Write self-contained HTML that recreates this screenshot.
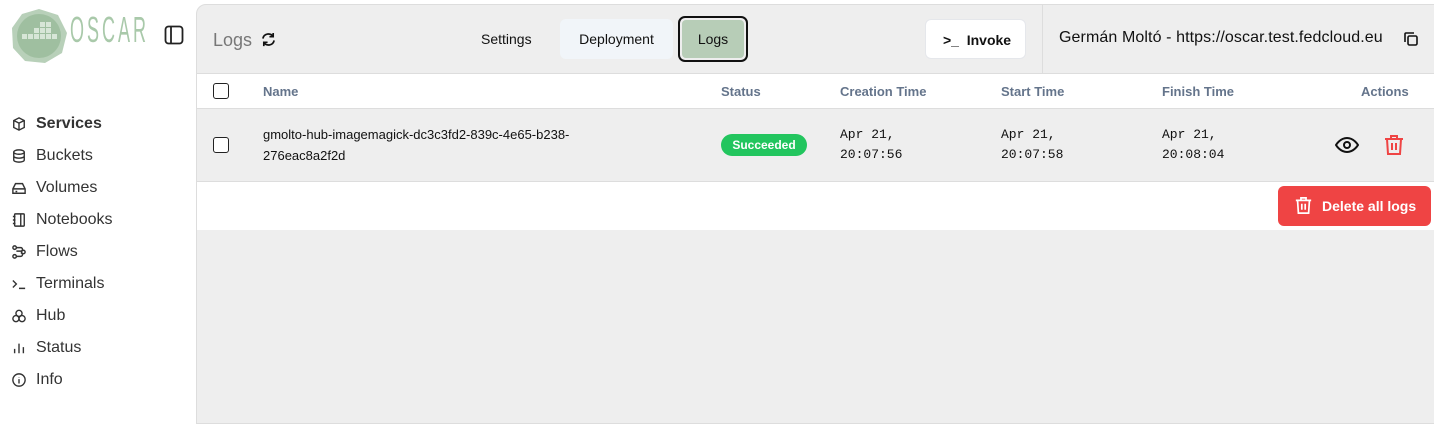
<!DOCTYPE html>
<html><head><meta charset="utf-8"><style>
*{box-sizing:border-box;margin:0;padding:0}
body{width:1434px;height:422px;overflow:hidden;background:#fff;font-family:"Liberation Sans",sans-serif;position:relative;color:#111}
.abs{position:absolute}
.side a{position:absolute;left:12px;display:flex;align-items:center;font-size:16px;color:#333}
.side a svg{width:14px;height:14px;margin-right:10px;stroke:#333;fill:none;stroke-width:1.6}
.main{position:absolute;left:196px;top:4px;width:1240px;height:420px;background:#eeeeee;border:1px solid #ddd;border-top-left-radius:10px}
.th{font-size:13px;color:#64748b;font-weight:bold;position:absolute;top:80px}
.mono{font-family:"Liberation Mono",monospace;font-size:13px;line-height:20px;position:absolute;top:125px;color:#111}
.cb{position:absolute;left:213px;width:16px;height:16px;border:1.5px solid #222;border-radius:3px;background:#fff}
</style></head><body>
<svg class="abs" style="left:10px;top:8px" width="58" height="56" viewBox="0 0 58 56">
<polygon points="29,1 48,7 57,25 52,45 35,55 15,53 3,40 2,20 12,6" fill="#b8d0b9"/>
<circle cx="29" cy="28" r="22" fill="#9fbfa0"/>
<g fill="#d7e6d7"><rect x="30" y="14" width="5" height="5"/><rect x="36" y="14" width="5" height="5"/><rect x="24" y="20" width="5" height="5"/><rect x="30" y="20" width="5" height="5"/><rect x="36" y="20" width="5" height="5"/><rect x="12" y="26" width="5" height="5"/><rect x="18" y="26" width="5" height="5"/><rect x="24" y="26" width="5" height="5"/><rect x="30" y="26" width="5" height="5"/><rect x="36" y="26" width="5" height="5"/><rect x="42" y="26" width="5" height="5"/></g>
</svg>
<div class="abs" style="left:70px;top:9px;font-size:36px;color:#a9c9aa;letter-spacing:6px;transform:scaleX(0.5);transform-origin:left top;white-space:nowrap">OSCAR</div>
<svg class="abs" style="left:164px;top:25px" width="20" height="20" viewBox="0 0 20 20" fill="none" stroke="#222" stroke-width="1.8"><rect x="1.5" y="1.5" width="17" height="17" rx="3"/><line x1="7" y1="2" x2="7" y2="18"/></svg>
<div class="side">
<a style="top:115px;font-weight:bold"><svg viewBox="0 0 16 16"><path d="M8 1l6 3v8l-6 3-6-3V4z M2 4l6 3 6-3 M8 7v8"/></svg>Services</a>
<a style="top:147px"><svg viewBox="0 0 16 16"><ellipse cx="8" cy="3.5" rx="6" ry="2.5"/><path d="M2 3.5v9c0 1.4 2.7 2.5 6 2.5s6-1.1 6-2.5v-9M2 8c0 1.4 2.7 2.5 6 2.5s6-1.1 6-2.5"/></svg>Buckets</a>
<a style="top:179px"><svg viewBox="0 0 16 16"><path d="M1 9l3-6h8l3 6v5H1z M1 9h14 M4 12h2"/></svg>Volumes</a>
<a style="top:211px"><svg viewBox="0 0 16 16"><rect x="3" y="1" width="11" height="14" rx="1"/><path d="M10 1v14 M1 4h3M1 8h3M1 12h3"/></svg>Notebooks</a>
<a style="top:243px"><svg viewBox="0 0 16 16"><circle cx="3" cy="3" r="2"/><circle cx="13" cy="8" r="2"/><circle cx="3" cy="13" r="2"/><path d="M5 3h5a2 2 0 010 4H5M5 13h5a2 2 0 000-4"/></svg>Flows</a>
<a style="top:275px"><svg viewBox="0 0 16 16"><path d="M1 4l4 4-4 4M8 13h7"/></svg>Terminals</a>
<a style="top:307px"><svg viewBox="0 0 16 16"><circle cx="8" cy="5" r="3.5"/><circle cx="4.5" cy="11" r="3.5"/><circle cx="11.5" cy="11" r="3.5"/></svg>Hub</a>
<a style="top:339px"><svg viewBox="0 0 16 16"><path d="M3 14V9M8 14V3M13 14V7"/></svg>Status</a>
<a style="top:371px"><svg viewBox="0 0 16 16"><circle cx="8" cy="8" r="7"/><path d="M8 7v5M8 4.5v.5"/></svg>Info</a>
</div>
<div class="main"></div>
<div class="abs" style="left:213px;top:30px;font-size:18px;color:#777">Logs</div>
<svg class="abs" style="left:261px;top:32px" width="15" height="15" viewBox="0 0 16 16" fill="none" stroke="#111" stroke-width="1.8"><path d="M2 7a6 6 0 0111-2M14 9a6 6 0 01-11 2M13 1v4h-4M3 15v-4h4"/></svg>
<div class="abs" style="left:481px;top:31px;font-size:14px">Settings</div>
<div class="abs" style="left:560px;top:19px;width:113px;height:40px;background:#f1f5f9;border-radius:6px;font-size:14px;text-align:center;line-height:40px">Deployment</div>
<div class="abs" style="left:678px;top:16px;width:70px;height:46px;border:2px solid #111;border-radius:7px;padding:2px"><div style="background:#b7cdb7;border-radius:4px;height:100%;font-size:14px;text-align:center;line-height:38px">Logs</div></div>
<div class="abs" style="left:925px;top:19px;width:101px;height:40px;background:#fff;border:1px solid #e5e7eb;border-radius:6px;font-size:14px;font-weight:bold;line-height:40px;padding-left:17px">&gt;_ &nbsp;Invoke</div>
<div class="abs" style="left:1042px;top:5px;width:1px;height:68px;background:#ddd"></div>
<div class="abs" style="left:1059px;top:29px;font-size:16px;letter-spacing:0.1px">Germán Moltó - https://oscar.test.fedcloud.eu</div>
<svg class="abs" style="left:1403px;top:31px" width="16" height="16" viewBox="0 0 16 16" fill="none" stroke="#111" stroke-width="1.6"><rect x="5" y="5" width="9" height="9" rx="1.5"/><path d="M2 11V3a1 1 0 011-1h8"/></svg>
<div class="abs" style="left:197px;top:73px;width:1237px;height:36px;background:#fff;border-top:1px solid #ddd;border-bottom:1px solid #ddd"></div>
<div class="cb" style="top:83px"></div>
<div class="th" style="left:263px;top:84px">Name</div>
<div class="th" style="left:721px;top:84px">Status</div>
<div class="th" style="left:840px;top:84px">Creation Time</div>
<div class="th" style="left:1001px;top:84px">Start Time</div>
<div class="th" style="left:1162px;top:84px">Finish Time</div>
<div class="th" style="left:1361px;top:84px">Actions</div>
<div class="cb" style="top:137px"></div>
<div class="abs" style="left:263px;top:124px;font-size:13px;line-height:21px">gmolto-hub-imagemagick-dc3c3fd2-839c-4e65-b238-<br>276eac8a2f2d</div>
<div class="abs" style="left:721px;top:134px;width:86px;height:22px;border-radius:11px;background:#22c55e;color:#fff;font-size:12px;font-weight:bold;text-align:center;line-height:22px">Succeeded</div>
<div class="mono" style="left:840px">Apr 21,<br>20:07:56</div>
<div class="mono" style="left:1001px">Apr 21,<br>20:07:58</div>
<div class="mono" style="left:1162px">Apr 21,<br>20:08:04</div>
<svg class="abs" style="left:1335px;top:136px" width="24" height="18" viewBox="0 0 24 18" fill="none" stroke="#111" stroke-width="2"><path d="M1 9s4-7 11-7 11 7 11 7-4 7-11 7S1 9 1 9z"/><circle cx="12" cy="9" r="3"/></svg>
<svg class="abs" style="left:1384px;top:134px" width="20" height="22" viewBox="0 0 20 22" fill="none" stroke="#ef4444" stroke-width="2"><path d="M1 5h18M7 5V2h6v3M3 5l1 15h12l1-15M8 9v7M12 9v7"/></svg>
<div class="abs" style="left:197px;top:181px;width:1237px;height:49px;background:#fff;border-top:1px solid #ddd"></div>
<div class="abs" style="left:1278px;top:186px;width:153px;height:40px;background:#ef4444;border-radius:6px;color:#fff;font-size:14px;font-weight:bold;line-height:40px;padding-left:44px">Delete all logs</div>
<svg class="abs" style="left:1295px;top:196px" width="17" height="19" viewBox="0 0 20 22" fill="none" stroke="#fff" stroke-width="2"><path d="M1 5h18M7 5V2h6v3M3 5l1 15h12l1-15M8 9v7M12 9v7"/></svg>
</body></html>
